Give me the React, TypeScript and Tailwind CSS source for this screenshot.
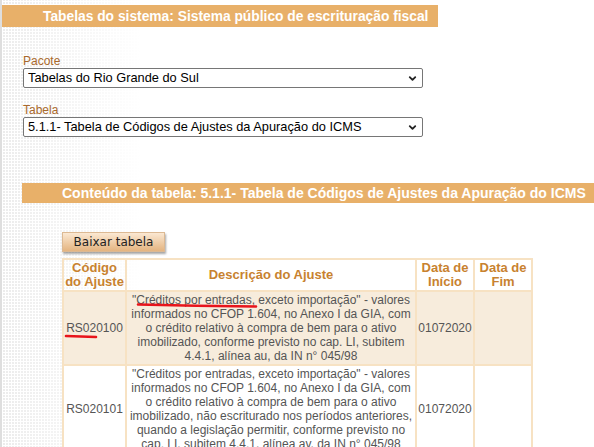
import React from 'react';
import { ChevronDown } from 'lucide-react';

const rows = [
  {
    code: 'RS020100',
    desc: '"Créditos por entradas, exceto importação" - valores informados no CFOP 1.604, no Anexo I da GIA, com o crédito relativo à compra de bem para o ativo imobilizado, conforme previsto no cap. LI, subitem 4.4.1, alínea au, da IN n° 045/98',
    start: '01072020',
    end: '',
  },
  {
    code: 'RS020101',
    desc: '"Créditos por entradas, exceto importação" - valores informados no CFOP 1.604, no Anexo I da GIA, com o crédito relativo à compra de bem para o ativo imobilizado, não escriturado nos períodos anteriores, quando a legislação permitir, conforme previsto no cap. LI, subitem 4.4.1, alínea av, da IN n° 045/98',
    start: '01072020',
    end: '',
  },
];

function Field({ label, value }: { label: string; value: string }) {
  return (
    <div className="flex flex-col">
      <label className="block text-[12px] leading-[14px] text-[#a9692c]">{label}</label>
      <div className="relative w-[400px] h-[20px]">
        <select className="block w-full h-[20px] border border-[#767676] rounded-[2px] bg-white pl-[4px] pr-6 text-[12.8px] leading-[18px] text-black appearance-none">
          <option>{value}</option>
        </select>
        <ChevronDown className="absolute right-[5px] top-[5px] w-[11px] h-[11px] text-[#222] pointer-events-none" strokeWidth={4} />
      </div>
    </div>
  );
}

export default function App() {
  return (
    <div className="relative min-h-screen overflow-hidden border-l-2 border-[#dedede] bg-white bg-[linear-gradient(90deg,rgba(255,255,255,0)_0px,rgba(255,255,255,0.3)_40px,#fff_140px),repeating-linear-gradient(90deg,#fff_0px,#fff_1px,transparent_1px,transparent_3px),repeating-linear-gradient(0deg,#fff_0px,#fff_1px,transparent_1px,transparent_3px),linear-gradient(#ececec,#ececec)] font-['Liberation_Sans',Arial,sans-serif]">
      <div className="pt-[5px] pb-10">
        <div className="w-[436px] h-[22px] bg-[#e8b069] pl-[41px] text-[13.8px] leading-[23px] font-bold text-white whitespace-nowrap">
          Tabelas do sistema: Sistema público de escrituração fiscal
        </div>

        <div className="ml-[21px] mt-[27px] flex flex-col gap-[15px]">
          <Field label="Pacote" value="Tabelas do Rio Grande do Sul" />
          <Field label="Tabela" value="5.1.1- Tabela de Códigos de Ajustes da Apuração do ICMS" />
        </div>

        <div className="ml-[20px] mt-[46px] h-[20px] bg-[#e8b069] pl-[40px] text-[14px] leading-[20px] font-bold text-white whitespace-nowrap overflow-hidden">
          Conteúdo da tabela: 5.1.1- Tabela de Códigos de Ajustes da Apuração do ICMS
        </div>

        <div className="ml-[60px] mt-[29px]">
          <button className="block w-[103px] h-[20px] border border-[#dcb993] bg-[linear-gradient(#fbe8d2,#e4b480)] shadow-[1px_2px_2px_rgba(0,0,0,0.35)] text-[12px] leading-[18px] text-[#222] font-['DejaVu_Sans',sans-serif]">
            Baixar tabela
          </button>

          <table className="mt-[6px] w-[469px] border-collapse table-fixed">
            <colgroup>
              <col className="w-[63px]" />
              <col className="w-[290px]" />
              <col className="w-[58px]" />
              <col className="w-[58px]" />
            </colgroup>
            <thead>
              <tr className="text-[13px] leading-[14px] font-bold text-[#c8822f]">
                <th className="border-2 border-[#f7e2c3] py-[1px] px-0 font-bold">Código do Ajuste</th>
                <th className="border-2 border-[#f7e2c3] py-[1px] font-bold">Descrição do Ajuste</th>
                <th className="border-2 border-[#f7e2c3] py-[1px] px-0 font-bold">Data de Início</th>
                <th className="border-2 border-[#f7e2c3] py-[1px] px-0 font-bold">Data de Fim</th>
              </tr>
            </thead>
            <tbody>
              {rows.map((r, i) => (
                <tr key={r.code} className={i % 2 === 0 ? 'bg-[#f7ecdc]' : 'bg-white'}>
                  <td className="border-2 border-[#f7e2c3] text-center text-[12px] leading-[14px] text-[#555] py-[1px]">{r.code}</td>
                  <td className="border-2 border-[#f7e2c3] text-center text-[12px] leading-[14px] text-[#555] py-[1px] px-[2px]">{r.desc}</td>
                  <td className="border-2 border-[#f7e2c3] text-center text-[12px] leading-[14px] text-[#555] py-[1px]">{r.start}</td>
                  <td className="border-2 border-[#f7e2c3] text-center text-[12px] leading-[14px] text-[#555] py-[1px]">{r.end}</td>
                </tr>
              ))}
            </tbody>
          </table>
        </div>
      </div>

      {/* red marks drawn over the text */}
      <svg className="absolute left-[134px] top-[302px] w-[122px] h-[7px] pointer-events-none" viewBox="0 0 122 7">
        <path d="M2 2.5 Q60 4 120 4.5" stroke="#e8141b" strokeWidth="2.6" strokeLinecap="round" fill="none" />
      </svg>
      <svg className="absolute left-[62px] top-[333px] w-[34px] h-[7px] pointer-events-none" viewBox="0 0 34 7">
        <path d="M2 3 Q16 3.5 32 4" stroke="#e8141b" strokeWidth="2.6" strokeLinecap="round" fill="none" />
      </svg>
    </div>
  );
}
